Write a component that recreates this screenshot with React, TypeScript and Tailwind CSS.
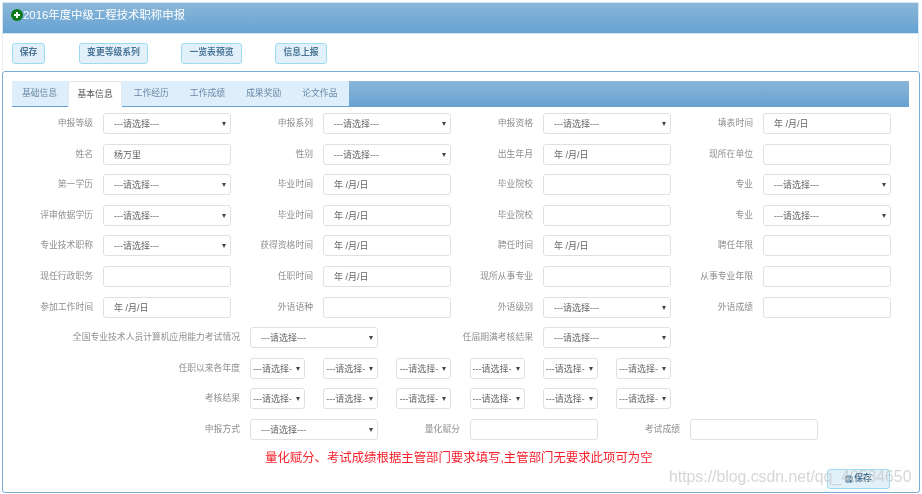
const cjk = "font-['Liberation_Sans','Noto_Sans_CJK_SC',sans-serif]";

function Label({ text, className }: { text: string; className: string }) {
  return <span className={`shrink-0 text-right text-[8.8px] leading-[21px] text-[#8f8f8f] ${className}`}>{text}</span>;
}

function Select({ className = "w-[128px]", text = "---请选择---", small = false }: { className?: string; text?: string; small?: boolean }) {
  return (
    <div className={`relative h-[21px] shrink-0 rounded-[3px] border border-[#e0e0e0] bg-white text-[9px] leading-[20px] text-[#666] ${className} ${small ? "pl-[2px]" : "pl-[10px]"}`}>
      {text}
      <span className="absolute right-[4px] top-[8px] h-0 w-0 border-x-[2.5px] border-t-[4px] border-x-transparent border-t-[#444]" />
    </div>
  );
}

function Input({ value = "", className = "w-[128px]" }: { value?: string; className?: string }) {
  return (
    <div className={`h-[21px] shrink-0 rounded-[3px] border border-[#e0e0e0] bg-white pl-[10px] text-[9px] leading-[20px] text-[#666] ${className}`}>{value}</div>
  );
}

type Field = [string, "s" | "i" | "d", string?];

const rows: Field[][] = [
  [["申报等级", "s"], ["申报系列", "s"], ["申报资格", "s"], ["填表时间", "d"]],
  [["姓名", "i", "杨万里"], ["性别", "s"], ["出生年月", "d"], ["现所在单位", "i"]],
  [["第一学历", "s"], ["毕业时间", "d"], ["毕业院校", "i"], ["专业", "s"]],
  [["评审依据学历", "s"], ["毕业时间", "d"], ["毕业院校", "i"], ["专业", "s"]],
  [["专业技术职称", "s"], ["获得资格时间", "d"], ["聘任时间", "d"], ["聘任年限", "i"]],
  [["现任行政职务", "i"], ["任职时间", "d"], ["现所从事专业", "i"], ["从事专业年限", "i"]],
  [["参加工作时间", "d"], ["外语语种", "i"], ["外语级别", "s"], ["外语成绩", "i"]],
];

const tabs = ["基础信息", "基本信息", "工作经历", "工作成绩", "成果奖励", "论文作品"];

function SmallRow({ label }: { label: string }) {
  return (
    <div className="flex h-[21px] items-start">
      <Label text={label} className="mr-[10px] w-[229px]" />
      <div className="grid w-[421px] grid-cols-[55px_55px_55px_55px_55px_55px] justify-between">
        {[0, 1, 2, 3, 4, 5].map((i) => (
          <Select key={i} small className="w-[55px]" text="---请选择-" />
        ))}
      </div>
    </div>
  );
}

export default function App() {
  return (
    <div className={`relative h-[494px] w-[922px] overflow-hidden bg-white blur-[0.35px] ${cjk}`}>
      <div className="ml-[2px] mr-[3px] mt-[2px] flex h-[32px] items-center border border-[#d4e6f2] bg-gradient-to-b from-[#8ab6d8] to-[#66a2d2] pb-[4px] pl-[8px]">
        <span className="-mt-[3px] flex h-[12px] w-[12px] items-center justify-center rounded-full bg-[#0a7a1c] -ml-[0.5px] mr-[0.5px]">
          <svg width="8" height="8" viewBox="0 0 8 8"><path d="M4 1v6M1 4h6" stroke="#fff" strokeWidth="1.9" /></svg>
        </span>
        <span className="text-[11.4px] text-white">2016年度中级工程技术职称申报</span>
      </div>

      <div className="ml-[2px] mr-[3px] flex h-[37px] items-center border-x border-[#e4eef5] pl-[9px] pt-[1px]">
        {[
          ["保存", "w-[33px]", "mr-[34px]"],
          ["变更等级系列", "w-[69px]", "mr-[33px]"],
          ["一览表预览", "w-[61px]", "mr-[33px]"],
          ["信息上报", "w-[52px]", ""],
        ].map(([t, w, m]) => (
          <div key={t} className={`flex h-[21px] items-center justify-center rounded-[3px] border border-[#9bdcf0] bg-[#e2f0fa] text-[8.8px] font-bold text-[#4a7596] ${w} ${m}`}>{t}</div>
        ))}
      </div>

      <div className="mx-[2px] h-[422px] rounded-[3px] border border-[#7cabd6] pl-[9px] pr-[10px] pt-[9px]">
        <div className="flex h-[26px] bg-gradient-to-b from-[#8ab6d8] to-[#66a2d2]">
          <div className="flex h-[25px] w-[337px] bg-[#deeefb]">
            {tabs.map((t, i) => (
              <div
                key={t}
                className={`flex items-center justify-center text-[8.8px] ${i === 0 ? "w-[55px] text-[#6a8aa6]" : i === 1 ? "mx-[1px] h-[26px] w-[54.2px] rounded-t-[2px] border-x border-t border-[#e2e8ee] bg-white text-[#555]" : "w-[56.2px] text-[#6a8aa6]"}`}
              >
                {t}
              </div>
            ))}
          </div>
        </div>

        <div className="-ml-[1px] mt-[6px] flex flex-col gap-[9.6px]">
          {rows.map((row, i) => (
            <div key={i} className="flex h-[21px]">
              {row.map(([label, kind, value]) => (
                <div key={label + kind} className="flex w-[220px] shrink-0">
                  <Label text={label} className="mr-[10px] w-[82px]" />
                  {kind === "s" && <Select />}
                  {kind === "i" && <Input value={value} />}
                  {kind === "d" && <Input value="年 /月/日" />}
                </div>
              ))}
            </div>
          ))}

          <div className="flex h-[21px]">
            <Label text="全国专业技术人员计算机应用能力考试情况" className="mr-[10px] w-[229px]" />
            <Select />
            <Label text="任届期满考核结果" className="mr-[10px] w-[155px]" />
            <Select />
          </div>
          <SmallRow label="任职以来各年度" />
          <SmallRow label="考核结果" />
          <div className="flex h-[21px]">
            <Label text="申报方式" className="mr-[10px] w-[229px]" />
            <Select />
            <Label text="量化赋分" className="mr-[10px] w-[82px]" />
            <Input />
            <Label text="考试成绩" className="mr-[10px] w-[82px]" />
            <Input />
          </div>
        </div>

        <div className="ml-[253px] mt-[8px] text-[12.4px] leading-[20px] text-[#f5222d]">量化赋分、考试成绩根据主管部门要求填写,主管部门无要求此项可为空</div>
        <div className="flex justify-end pr-[19px] pt-[1px]">
          <div className="flex h-[20px] w-[63px] items-center justify-center gap-[1px] rounded-[3px] border border-[#9bdcf0] bg-[#e2f0fa] text-[8.8px] font-bold text-[#3d6a8c]">
            <svg width="8" height="8" viewBox="0 0 8 8" fill="none" stroke="#3d6a8c" strokeWidth="1"><path d="M1 1h5l1 1v5H1zM2.5 1v2h3V1M2.5 7V5h3v2" /></svg>
            保存
          </div>
        </div>
      </div>

      <span className="pointer-events-none absolute left-[669px] top-[465px] font-['Liberation_Sans',sans-serif] text-[15.8px] text-[#c4c4c4]/70">https://blog.csdn.net/qq_40584650</span>
    </div>
  );
}
